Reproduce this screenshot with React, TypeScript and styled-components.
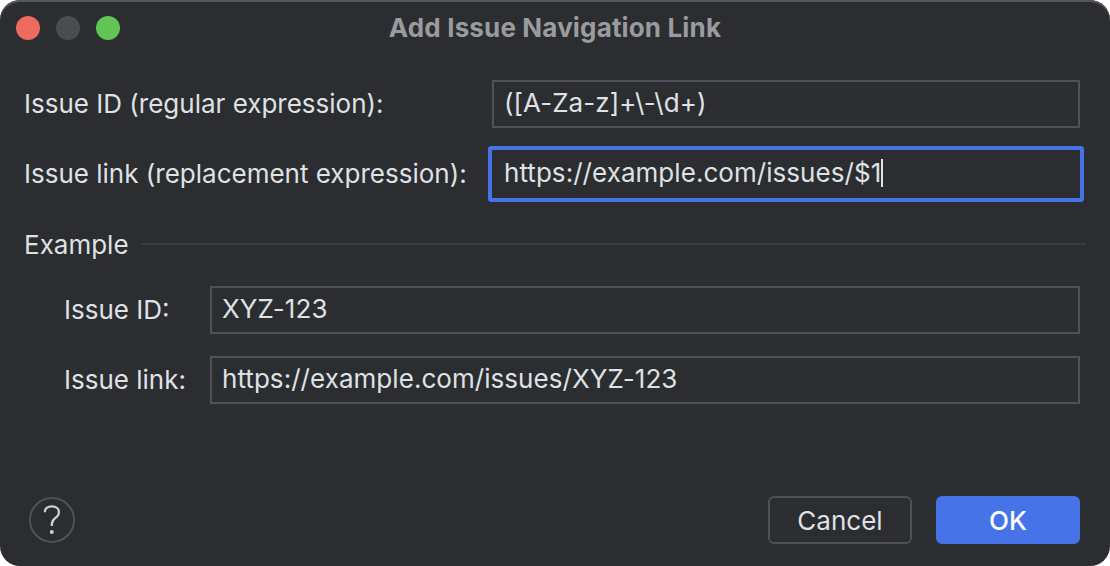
import React from "react";
import styled, { createGlobalStyle } from "styled-components";

const GlobalStyle = createGlobalStyle`
  html, body {
    margin: 0;
    padding: 0;
    background: #ffffff;
  }
  body {
    font-family: Inter, "Liberation Sans", sans-serif;
    -webkit-font-smoothing: antialiased;
  }
`;

const Dialog = styled.div`
  box-sizing: border-box;
  display: flex;
  flex-direction: column;
  width: 1110px;
  height: 566px;
  border-radius: 20px;
  background: #2b2d30;
  box-shadow: inset 0 2px 0 #55575b;
  overflow: hidden;
  color: #dfe1e5;
  font-size: 26px;
`;

const TitleBar = styled.div`
  position: relative;
  display: flex;
  align-items: center;
  justify-content: center;
  flex: none;
  height: 54px;
  padding-bottom: 2px;
`;

const Lights = styled.div`
  position: absolute;
  left: 16px;
  top: 16px;
  display: flex;
  gap: 16px;
`;

const Light = styled.span<{ $color: string }>`
  width: 24px;
  height: 24px;
  border-radius: 50%;
  background: ${(p) => p.$color};
`;

const Title = styled.div`
  font-size: 26px;
  font-weight: 700;
  letter-spacing: 0.15px;
  color: #9a9b9e;
`;

const Form = styled.div`
  display: flex;
  flex-direction: column;
  flex: 1;
  padding: 24px 30px 0 24px;
`;

const Row = styled.div<{ $labelWidth: number; $indent?: number }>`
  display: grid;
  grid-template-columns: ${(p) => p.$labelWidth}px 1fr;
  align-items: center;
  height: 48px;
  margin-bottom: 22px;
  padding-left: ${(p) => p.$indent ?? 0}px;
`;

const Label = styled.div`
  white-space: nowrap;
  padding-bottom: 2px;
`;

const Field = styled.div<{ $focused?: boolean }>`
  box-sizing: border-box;
  display: flex;
  align-items: center;
  height: 48px;
  padding: 0 10px 3px;
  border: 2px solid ${(p) => (p.$focused ? "#2b2d30" : "#4e5157")};
  box-shadow: ${(p) => (p.$focused ? "0 0 0 4px #4673e8" : "none")};
  border-radius: ${(p) => (p.$focused ? "1px" : "0")};
  letter-spacing: 0.05px;
  white-space: nowrap;
`;

const Caret = styled.span`
  width: 2px;
  height: 28px;
  background: #dfe1e5;
`;

const GroupHeader = styled.div`
  display: flex;
  align-items: center;
  gap: 12px;
  height: 32px;
  margin: 8px -6px 26px 0;
`;

const GroupLine = styled.div`
  flex: 1;
  height: 2px;
  background: #393b40;
`;

const Footer = styled.div`
  display: flex;
  align-items: center;
  justify-content: space-between;
  flex: none;
  height: 48px;
  padding: 0 30px 22px 29px;
`;

const HelpButton = styled.div`
  box-sizing: border-box;
  display: flex;
  align-items: center;
  justify-content: center;
  width: 46px;
  height: 46px;
  border: 2px solid #4e5157;
  border-radius: 50%;
  color: #ced0d6;
`;

const Buttons = styled.div`
  display: flex;
  gap: 24px;
`;

const Button = styled.div<{ $primary?: boolean }>`
  box-sizing: border-box;
  display: flex;
  align-items: center;
  justify-content: center;
  width: 144px;
  height: 48px;
  border-radius: 6px;
  border: 2px solid ${(p) => (p.$primary ? "#4673e8" : "#4e5157")};
  background: ${(p) => (p.$primary ? "#4673e8" : "transparent")};
  color: ${(p) => (p.$primary ? "#ffffff" : "#dfe1e5")};
  font-weight: ${(p) => (p.$primary ? 500 : 400)};
`;

const App = () => {
  return (
    <>
      <GlobalStyle />
      <Dialog>
        <TitleBar>
          <Lights>
            <Light $color="#ee6a5f" />
            <Light $color="#4b4c4f" />
            <Light $color="#61c554" />
          </Lights>
          <Title>Add Issue Navigation Link</Title>
        </TitleBar>
        <Form>
          <Row $labelWidth={468}>
            <Label>Issue ID (regular expression):</Label>
            <Field>([A-Za-z]+\-\d+)</Field>
          </Row>
          <Row $labelWidth={468}>
            <Label>Issue link (replacement expression):</Label>
            <Field $focused>
              https://example.com/issues/$1
              <Caret />
            </Field>
          </Row>
          <GroupHeader>
            Example
            <GroupLine />
          </GroupHeader>
          <Row $labelWidth={146} $indent={40}>
            <Label>Issue ID:</Label>
            <Field>XYZ-123</Field>
          </Row>
          <Row $labelWidth={146} $indent={40}>
            <Label>Issue link:</Label>
            <Field>https://example.com/issues/XYZ-123</Field>
          </Row>
        </Form>
        <Footer>
          <HelpButton>
            <svg width="20" height="32" viewBox="0 0 20 32" fill="none">
              <path
                d="M2.8 8.2C2.8 4.6 5.6 2.4 10 2.4C14.2 2.4 17 4.8 17 8.2C17 11 15.4 12.5 13.2 14.1C11 15.7 9.8 17.2 9.8 20.6V22"
                stroke="currentColor"
                strokeWidth="2.2"
              />
              <circle cx="9.8" cy="28" r="2" fill="currentColor" />
            </svg>
          </HelpButton>
          <Buttons>
            <Button>Cancel</Button>
            <Button $primary>OK</Button>
          </Buttons>
        </Footer>
      </Dialog>
    </>
  );
};

export default App;
